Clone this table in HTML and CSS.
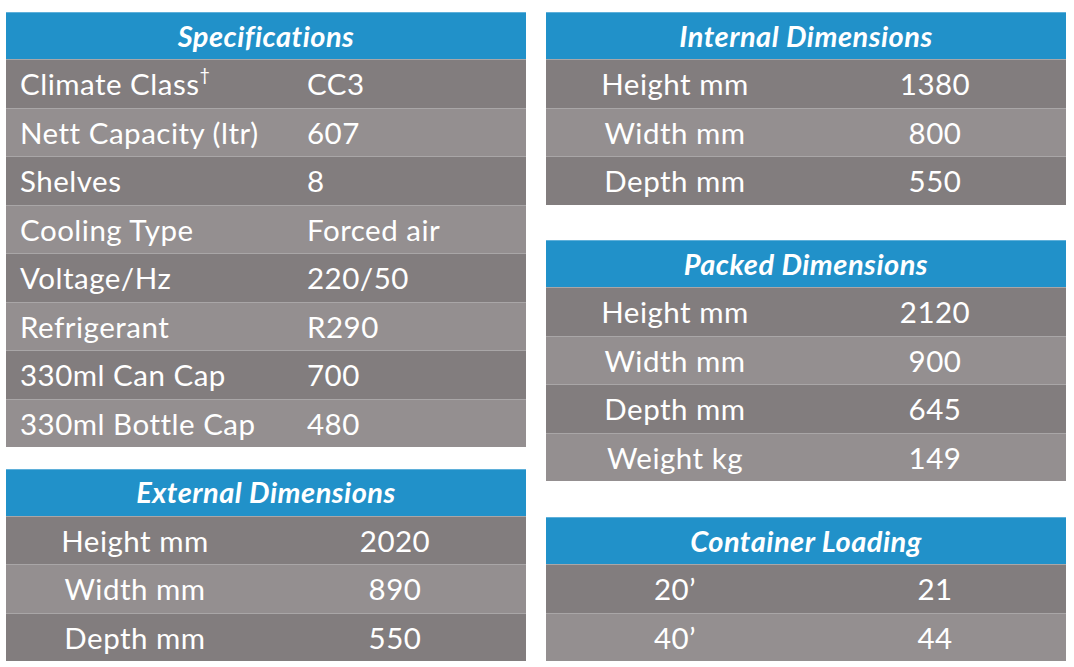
FILE: index.html
```html
<!DOCTYPE html>
<html>
<head>
<meta charset="utf-8">
<link rel="stylesheet" href="styles.css">
</head>
<body>
<div class="sheet">
  <div class="column">
    <section class="table table--left">
      <h2 class="table__head">Specifications</h2>
      <div class="row row--dark"><span class="cell">Climate Class<sup class="dagger">†</sup></span><span class="cell cell--value">CC3</span></div>
      <div class="row row--light"><span class="cell">Nett Capacity (ltr)</span><span class="cell cell--value">607</span></div>
      <div class="row row--dark"><span class="cell">Shelves</span><span class="cell cell--value">8</span></div>
      <div class="row row--light"><span class="cell">Cooling Type</span><span class="cell cell--value">Forced air</span></div>
      <div class="row row--dark"><span class="cell">Voltage/Hz</span><span class="cell cell--value">220/50</span></div>
      <div class="row row--light"><span class="cell">Refrigerant</span><span class="cell cell--value">R290</span></div>
      <div class="row row--dark"><span class="cell">330ml Can Cap</span><span class="cell cell--value">700</span></div>
      <div class="row row--light"><span class="cell">330ml Bottle Cap</span><span class="cell cell--value">480</span></div>
    </section>
    <section class="table table--center">
      <h2 class="table__head">External Dimensions</h2>
      <div class="row row--dark"><span class="cell">Height mm</span><span class="cell">2020</span></div>
      <div class="row row--light"><span class="cell">Width mm</span><span class="cell">890</span></div>
      <div class="row row--dark"><span class="cell">Depth mm</span><span class="cell">550</span></div>
    </section>
  </div>
  <div class="column">
    <section class="table table--center">
      <h2 class="table__head">Internal Dimensions</h2>
      <div class="row row--dark"><span class="cell">Height mm</span><span class="cell">1380</span></div>
      <div class="row row--light"><span class="cell">Width mm</span><span class="cell">800</span></div>
      <div class="row row--dark"><span class="cell">Depth mm</span><span class="cell">550</span></div>
    </section>
    <section class="table table--center">
      <h2 class="table__head">Packed Dimensions</h2>
      <div class="row row--dark"><span class="cell">Height mm</span><span class="cell">2120</span></div>
      <div class="row row--light"><span class="cell">Width mm</span><span class="cell">900</span></div>
      <div class="row row--dark"><span class="cell">Depth mm</span><span class="cell">645</span></div>
      <div class="row row--light"><span class="cell">Weight kg</span><span class="cell">149</span></div>
    </section>
    <section class="table table--center">
      <h2 class="table__head">Container Loading</h2>
      <div class="row row--dark"><span class="cell">20’</span><span class="cell">21</span></div>
      <div class="row row--light"><span class="cell">40’</span><span class="cell">44</span></div>
    </section>
  </div>
</div>
</body>
</html>
```

FILE: styles.css
```css
html, body {
  margin: 0;
  padding: 0;
  background: #ffffff;
}

body {
  font-family: Lato, "Open Sans", "Liberation Sans", sans-serif;
  color: #ffffff;
}

.sheet {
  display: flex;
  gap: 20px;
  padding: 12px 0 0 6px;
}

.column {
  width: 520px;
  height: 649px;
  display: flex;
  flex-direction: column;
  justify-content: space-between;
}

.table {
  display: flex;
  flex-direction: column;
}

.table__head {
  margin: 0;
  height: 47px;
  box-sizing: border-box;
  display: flex;
  align-items: center;
  justify-content: center;
  background: #2191c9;
  border-top: 1px solid #5fb0da;
  font-size: 29px;
  letter-spacing: 0.5px;
  font-weight: 700;
  font-style: italic;
  color: #ffffff;
  padding-bottom: 2px;
}

.row {
  height: 48.5px;
  box-sizing: border-box;
  border-top: 1px solid #a9a6a7;
  display: grid;
  grid-template-columns: 258px 1fr;
  align-items: center;
  font-size: 29.5px;
  letter-spacing: 0.5px;
  line-height: 1;
}

.row--dark {
  background: #827d7e;
}

.row--light {
  background: #948f90;
}

.table--left .row {
  grid-template-columns: 287px 1fr;
}

.table--left .cell {
  padding-left: 14px;
}

.table--center .cell {
  text-align: center;
}

.dagger {
  font-size: 18px;
  vertical-align: 14px;
  line-height: 0;
}
```
